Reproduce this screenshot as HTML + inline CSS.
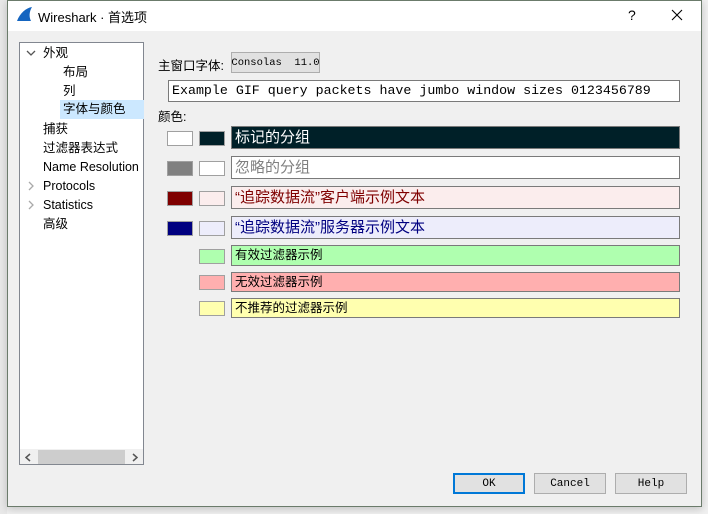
<!DOCTYPE html>
<html><head><meta charset="utf-8"><style>
*{box-sizing:border-box;margin:0;padding:0}
body{width:708px;height:514px;background:#f0f0f0;position:relative;overflow:hidden;font-family:"Segoe UI","Liberation Sans","Noto Sans CJK SC",sans-serif;font-size:12px;color:#000}
.a{position:absolute}
.win{left:7px;top:0;width:695px;height:507px;background:#f0f0f0;border:1px solid #6b7b6b;box-shadow:0 2px 8px rgba(0,0,0,.2)}
.title{left:8px;top:1px;width:693px;height:30px;background:#fff}
.cjk{font-family:"Liberation Sans","Noto Sans CJK SC",sans-serif}
.mono{font-family:"Liberation Mono","Noto Sans CJK SC",monospace}
.sw{width:26px;height:15px;border:1px solid #a0a0a0}
.tb{left:231px;width:449px;border:1px solid #7a7a7a;padding-left:3px;font-size:15px;line-height:21px}
.fb{left:231px;width:449px;border:1px solid #7a7a7a;padding-left:3px;font-size:12.5px;line-height:18px}
.btn{top:473px;width:72px;height:21px;background:#e1e1e1;border:1px solid #adadad;display:flex;align-items:center;justify-content:center;font-family:"Liberation Mono",monospace;font-size:11px}
.tree{left:19px;top:42px;width:125px;height:423px;background:#fff;border:1px solid #828790}
.ti{position:absolute;font-size:12.5px;line-height:18px;white-space:nowrap}
</style></head><body>
<div class="a" style="left:0;top:0;width:7px;height:514px;background:#e8e8e8"></div>
<div class="a win"></div>
<div class="a title"></div>
<svg class="a" style="left:16px;top:7px" width="17" height="15"><path d="M1 14 C4 6 10 1 16 0 C13 5 13 10 15 14 Z" fill="#1565c0"/></svg>
<div class="a cjk" style="left:38px;top:7px;font-size:13px">Wireshark · 首选项</div>
<div class="a" style="left:628px;top:7px;font-size:14px">?</div>
<svg class="a" style="left:671px;top:9px" width="12" height="12"><path d="M1 1L11 11M11 1L1 11" stroke="#000" stroke-width="1.1"/></svg>

<div class="a tree cjk">
<svg class="ti" style="left:6px;top:7px" width="10" height="6"><path d="M1 1L5 5L9 1" stroke="#555" fill="none" stroke-width="1.3"/></svg>
<div class="ti" style="left:23px;top:1px">外观</div>
<div class="ti" style="left:43px;top:20px">布局</div>
<div class="ti" style="left:43px;top:39px">列</div>
<div class="ti" style="left:40px;top:57px;width:84px;height:19px;background:#cce8ff;padding-left:3px">字体与颜色</div>
<div class="ti" style="left:23px;top:77px">捕获</div>
<div class="ti" style="left:23px;top:96px">过滤器表达式</div>
<div class="ti" style="left:23px;top:115px">Name Resolution</div>
<svg class="ti" style="left:8px;top:138px" width="6" height="10"><path d="M1 1L5 5L1 9" stroke="#aaa" fill="none" stroke-width="1.3"/></svg>
<div class="ti" style="left:23px;top:134px">Protocols</div>
<svg class="ti" style="left:8px;top:157px" width="6" height="10"><path d="M1 1L5 5L1 9" stroke="#aaa" fill="none" stroke-width="1.3"/></svg>
<div class="ti" style="left:23px;top:153px">Statistics</div>
<div class="ti" style="left:23px;top:172px">高级</div>
<div class="ti" style="left:0;top:406px;width:123px;height:15px;background:#f0f0f0"></div>
<div class="ti" style="left:18px;top:407px;width:87px;height:14px;background:#cdcdcd"></div>
<svg class="ti" style="left:5px;top:410px" width="6" height="9"><path d="M5 1L1 4.5L5 8" stroke="#555" fill="none" stroke-width="1.5"/></svg>
<svg class="ti" style="left:112px;top:410px" width="6" height="9"><path d="M1 1L5 4.5L1 8" stroke="#555" fill="none" stroke-width="1.5"/></svg>
</div>

<div class="a cjk" style="left:158px;top:55px;font-size:12.5px">主窗口字体:</div>
<div class="a mono" style="left:231px;top:52px;width:89px;height:21px;background:#e1e1e1;border:1px solid #adadad;font-size:10.5px;display:flex;align-items:center;justify-content:center;white-space:nowrap">Consolas&nbsp;&nbsp;11.0</div>
<div class="a mono" style="left:168px;top:80px;width:512px;height:22px;background:#fff;border:1px solid #7a7a7a;font-size:13.3px;line-height:20px;padding-left:3px;white-space:nowrap">Example GIF query packets have jumbo window sizes 0123456789</div>
<div class="a cjk" style="left:158px;top:106px;font-size:12.5px">颜色:</div>

<div class="a sw" style="left:167px;top:131px;background:#fff"></div>
<div class="a sw" style="left:199px;top:131px;background:#002028"></div>
<div class="a tb cjk" style="top:126px;height:23px;background:#002028;color:#fff">标记的分组</div>

<div class="a sw" style="left:167px;top:161px;background:#808080"></div>
<div class="a sw" style="left:199px;top:161px;background:#fff"></div>
<div class="a tb cjk" style="top:156px;height:23px;background:#fff;color:#808080">忽略的分组</div>

<div class="a sw" style="left:167px;top:191px;background:#7f0000"></div>
<div class="a sw" style="left:199px;top:191px;background:#fbeded"></div>
<div class="a tb cjk" style="top:186px;height:23px;background:#fbeded;color:#7f0000">“追踪数据流”客户端示例文本</div>

<div class="a sw" style="left:167px;top:221px;background:#000080"></div>
<div class="a sw" style="left:199px;top:221px;background:#ededfb"></div>
<div class="a tb cjk" style="top:216px;height:23px;background:#ededfb;color:#000080">“追踪数据流”服务器示例文本</div>

<div class="a sw" style="left:199px;top:249px;background:#afffaf"></div>
<div class="a fb cjk" style="top:245px;height:21px;background:#afffaf">有效过滤器示例</div>
<div class="a sw" style="left:199px;top:275px;background:#ffafaf"></div>
<div class="a fb cjk" style="top:272px;height:20px;background:#ffafaf">无效过滤器示例</div>
<div class="a sw" style="left:199px;top:301px;background:#ffffaf"></div>
<div class="a fb cjk" style="top:298px;height:20px;background:#ffffaf">不推荐的过滤器示例</div>

<div class="a btn" style="left:453px;border:2px solid #0078d7">OK</div>
<div class="a btn" style="left:534px">Cancel</div>
<div class="a btn" style="left:615px">Help</div>
</body></html>
